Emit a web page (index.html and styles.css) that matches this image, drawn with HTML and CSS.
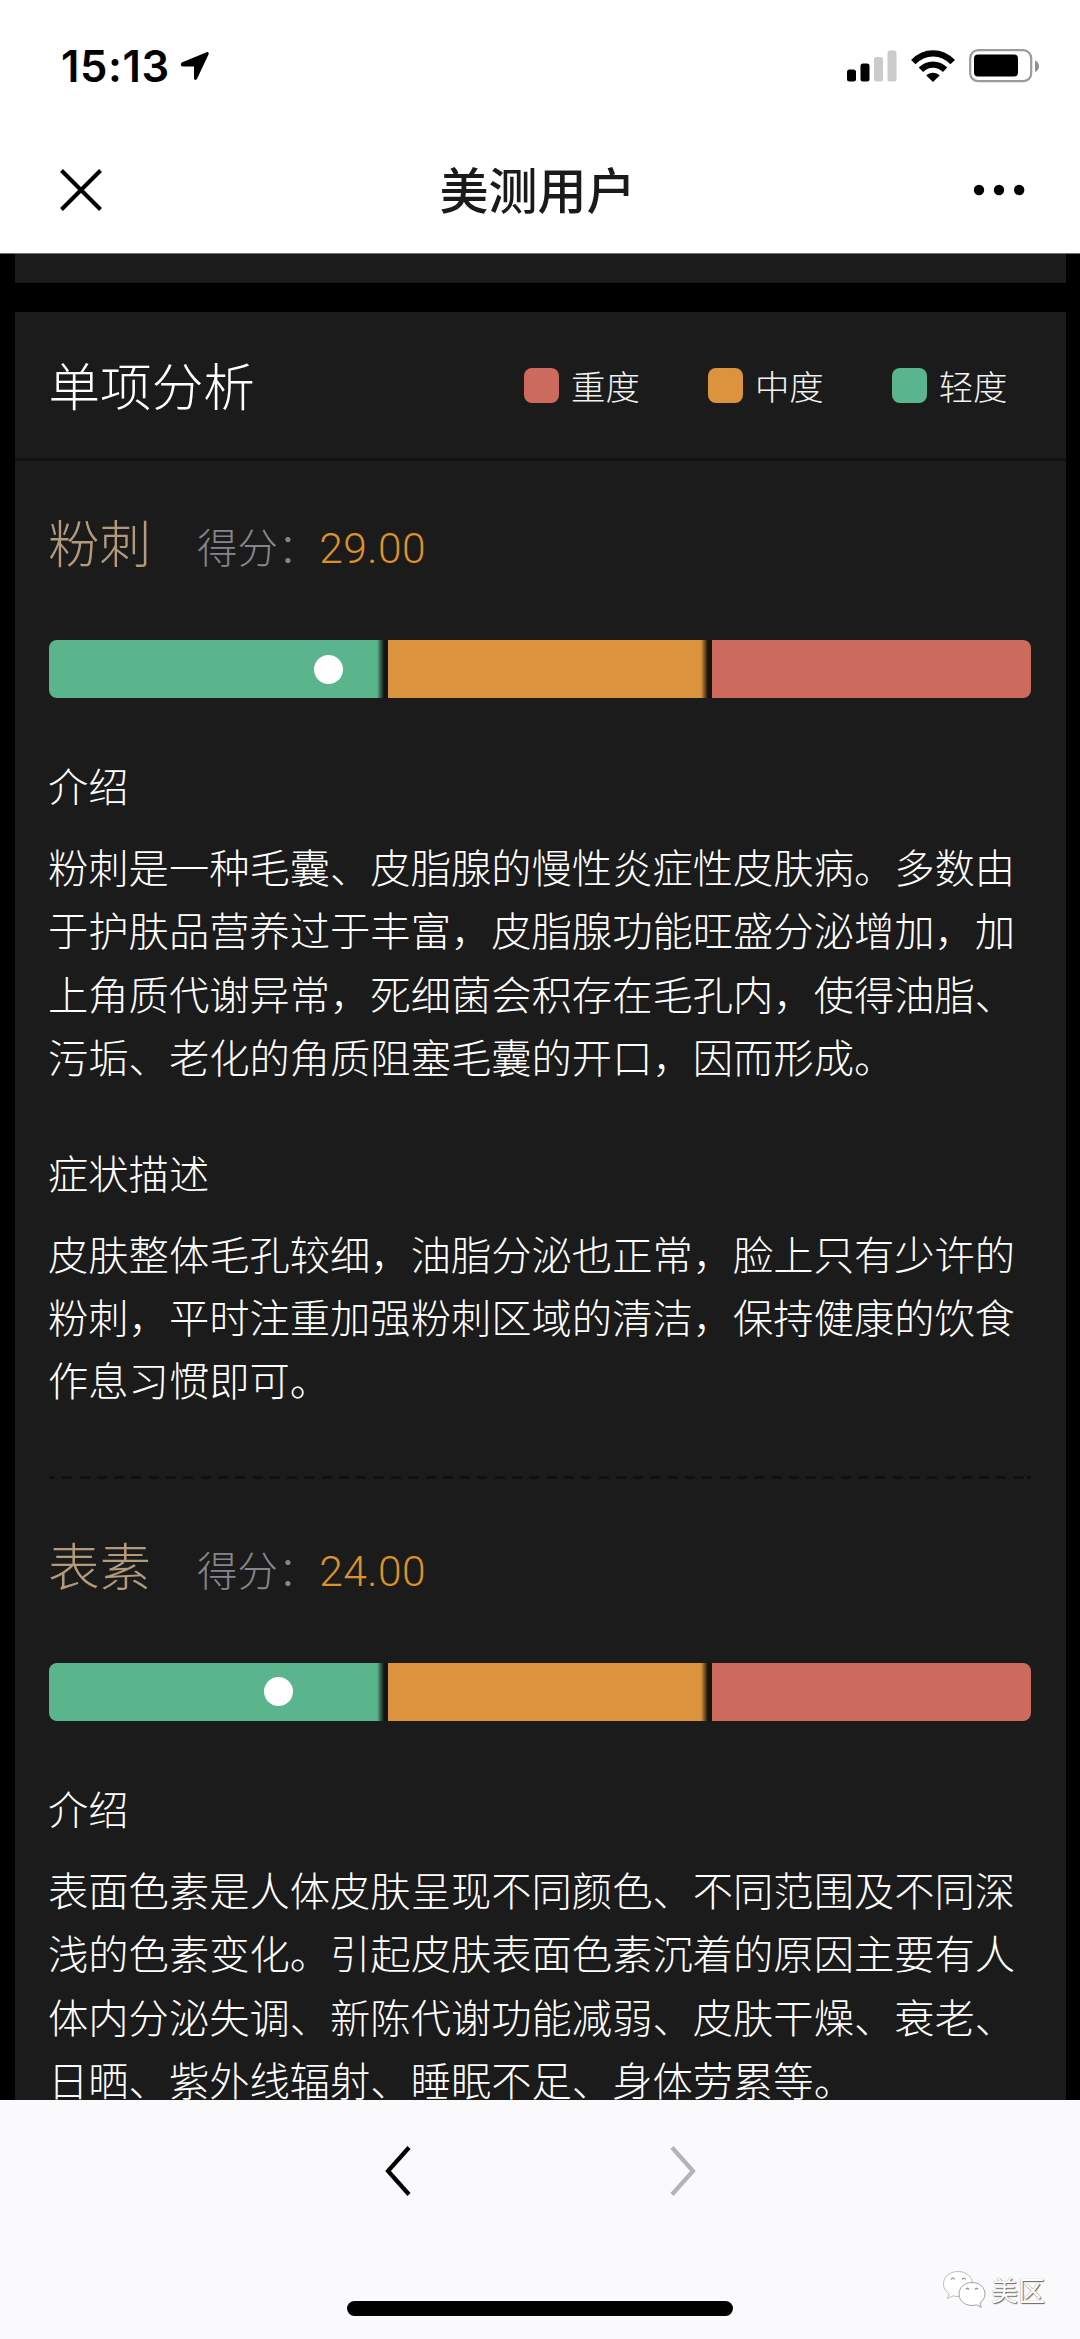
FILE: index.html
```html
<!DOCTYPE html>
<html lang="zh-CN">
<head>
<meta charset="utf-8">
<title>美测用户</title>
<link rel="stylesheet" href="styles.css">
</head>
<body>
<div class="screen">
  <header class="top">
    <div class="status">
      <div class="status-left">
        <span class="time">15:13</span>
        <svg class="loc" width="30" height="30" viewBox="0 0 30 30"><path d="M26.600 1.200 2.300 11.200c-2.200 1-1.800 4.200.5 4.200H14V27c0 2.200 2.300 2.600 3.200.6L28.600 3.200c.6-1.500-.6-2.600-2-2Z"/></svg>
      </div>
      <div class="status-right">
        <svg width="50" height="32" viewBox="0 0 50 32"><rect x="0" y="19.500" width="9" height="12" rx="2.500"/><rect x="13.500" y="13.500" width="9" height="18" rx="2.500"/><rect x="27" y="7" width="9" height="24.500" rx="2.500" fill="#cbcbcb"/><rect x="40.500" y="0.500" width="9" height="31" rx="2.500" fill="#cbcbcb"/></svg>
        <svg width="44" height="32" viewBox="0 0 44 32"><g fill="none" stroke="#000" stroke-width="6.200"><path d="M2.300 12.200C13.400.400 30.600.400 41.700 12.200"/><path d="M9.900 19.800c6.900-7 17.300-7 24.200 0"/></g><path d="M15.300 25.400c3.700-3.700 9.700-3.700 13.400 0L22 32Z"/></svg>
        <svg width="71" height="34" viewBox="0 0 71 34"><rect x="1.200" y="1.200" width="61" height="31" rx="8" fill="none" stroke="#9b9b9b" stroke-width="2.200"/><rect x="5" y="5.500" width="44" height="22" rx="4"/><path d="M66 11.500c5.300 2 5.300 9.500 0 11.500Z" fill="#8f8f8f"/></svg>
      </div>
    </div>
    <div class="nav">
      <svg class="close" width="42" height="42" viewBox="0 0 42 42"><path d="M1.500 1.500 40.500 40.500M40.500 1.500 1.500 40.500" stroke="#000" stroke-width="4"/></svg>
      <h1>美测用户</h1>
      <svg class="more" width="52" height="12" viewBox="0 0 52 12"><circle cx="6" cy="6" r="5.200"/><circle cx="26" cy="6" r="5.200"/><circle cx="46.200" cy="6" r="5.200"/></svg>
    </div>
  </header>

  <main>
    <div class="card previous"></div>
    <section class="card">
      <div class="card-head">
        <h2>单项分析</h2>
        <ul class="legend">
          <li><i class="swatch red"></i>重度</li>
          <li><i class="swatch orange"></i>中度</li>
          <li><i class="swatch green"></i>轻度</li>
        </ul>
      </div>

      <article class="item">
        <div class="item-head"><h3>粉刺</h3><span class="label">得分：</span><span class="score">29.00</span></div>
        <div class="bar"><div class="part low"></div><div class="part mid"></div><div class="part high"></div><b class="dot" style="left:28.500%"></b></div>
        <h4>介绍</h4>
        <p>粉刺是一种毛囊、皮脂腺的慢性炎症性皮肤病。多数由于护肤品营养过于丰富，皮脂腺功能旺盛分泌增加，加上角质代谢异常，死细菌会积存在毛孔内，使得油脂、污垢、老化的角质阻塞毛囊的开口，因而形成。</p>
        <h4>症状描述</h4>
        <p>皮肤整体毛孔较细，油脂分泌也正常，脸上只有少许的粉刺，平时注重加强粉刺区域的清洁，保持健康的饮食作息习惯即可。</p>
      </article>
      <div class="dash"></div>
      <article class="item">
        <div class="item-head"><h3>表素</h3><span class="label">得分：</span><span class="score">24.00</span></div>
        <div class="bar"><div class="part low"></div><div class="part mid"></div><div class="part high"></div><b class="dot" style="left:23.400%"></b></div>
        <h4>介绍</h4>
        <p>表面色素是人体皮肤呈现不同颜色、不同范围及不同深浅的色素变化。引起皮肤表面色素沉着的原因主要有人体内分泌失调、新陈代谢功能减弱、皮肤干燥、衰老、日晒、紫外线辐射、睡眠不足、身体劳累等。</p>
      </article>
    </section>
  </main>

  <footer class="bottom">
    <div class="history">
      <svg width="28" height="50" viewBox="0 0 28 50"><path d="M25 1.500 4 25 25 48.500" fill="none" stroke="#000" stroke-width="4.200"/></svg>
      <svg width="28" height="50" viewBox="0 0 28 50"><path d="M3 1.500 24 25 3 48.500" fill="none" stroke="#b4b4b6" stroke-width="4.200"/></svg>
    </div>
    <div class="home"></div>
    <div class="mark">
      <svg width="46" height="40" viewBox="0 0 46 40"><g fill="#fff" stroke="#a2a2a4" stroke-width="1"><path d="M16 1.500C7.500 1.500 1.500 7 1.500 14c0 4.200 2.200 7.600 5.700 10L5.500 28.500l5.500-2.700c1.600.5 3.300.7 5 .7 8.500 0 14.500-5.500 14.500-12.500S24.500 1.500 16 1.500Z" stroke-opacity=".7"/><path d="M30 12.500c-7.500 0-13 5-13 11.500s5.500 11.500 13 11.500c1.700 0 3.200-.2 4.500-.7l4.800 2.500-1.300-4.500c3.100-2.200 5-5.200 5-8.800 0-6.500-5.500-11.500-13-11.500Z"/></g><g fill="none" stroke="#909092" stroke-width="1.300"><path d="M9 9.500q1.800-2.800 3.600 0M20 9.500q1.800-2.800 3.600 0M24 19.500q1.500-2.500 3 0M33 19.500q1.500-2.500 3 0"/></g></svg>
      <span>美区</span>
    </div>
  </footer>
</div>
</body>
</html>
```
FILE: styles.css
```css
* { box-sizing: border-box; margin: 0; padding: 0; }
body { background: #fff; font-family: "Noto Sans CJK SC", sans-serif; }
svg { display: block; flex: none; }
.screen { width: 1080px; height: 2339px; display: flex; flex-direction: column; overflow: hidden; }

.top { height: 254px; flex: none; background: #fff; border-bottom: 1px solid #6d7370; }
.status { height: 132px; padding: 0 40px 0 61px; display: flex; justify-content: space-between; align-items: center; }
.status-left { display: flex; align-items: center; gap: 10px; }
.time { font: 600 43.500px/50px Inter, sans-serif; letter-spacing: 0.600px; color: #000; }
.loc { margin-top: -1px; }
.status-right { display: flex; align-items: center; gap: 14px; }
.nav { height: 116px; padding: 0 55px 0 60px; display: grid; grid-template-columns: 1fr auto 1fr; align-items: center; }
.nav h1 { margin: -5px 10px 0 0; font-weight: 500; font-size: 49px; line-height: 70px; color: #1a1a1a; }
.close { margin-top: -1px; }
.more { justify-self: end; }

main { flex: none; height: 1846px; overflow: hidden; background: #000; padding: 0 14.500px; }
.card { background: #1b1b1b; }
.previous { height: 29px; margin-bottom: 29px; }
.card-head { height: 149px; padding: 0 58px 0 34px; display: flex; align-items: center; justify-content: space-between; border-bottom: 3px solid #121212; }
.card-head h2 { margin-top: -3px; font-weight: 300; font-size: 51.600px; line-height: 74px; color: #fff; }
.legend { display: flex; gap: 68px; list-style: none; font-weight: 300; font-size: 34.400px; line-height: 50px; color: #f2f2f2; }
.legend li { display: flex; align-items: center; gap: 12px; }
.swatch { width: 35px; height: 35px; border-radius: 8px; }
.red { background: #cd6a5e; }
.orange { background: #dc933e; }
.green { background: #5ab48c; }

.item { padding: 43px 34.500px 0; }
.item-head { height: 74px; display: flex; align-items: baseline; }
.item-head h3 { width: 149px; margin-left: -1px; font-weight: 300; font-size: 51.600px; line-height: 74px; color: #b39a7c; }
.label { font-weight: 300; font-size: 40.400px; line-height: 60px; color: #85858b; }
.score { margin-left: 1px; font: 300 42.500px/60px Roboto, sans-serif; letter-spacing: 0.500px; color: #dd9129; }
.bar { position: relative; margin-top: 62px; height: 58px; display: flex; border-radius: 8px; overflow: hidden; background: #1b1b1b; }
.low { width: 339px; background: linear-gradient(90deg, #5ab48c 328px, #101614 335px, #151515); }
.mid { width: 323.500px; background: linear-gradient(90deg, #dc933e 313px, #19130c 320px, #151515); }
.high { flex: 1; background: #cd6a5e; }
.dot { position: absolute; top: 50%; width: 29px; height: 29px; margin: -14.500px 0 0 -14.500px; border-radius: 50%; background: #fff; }
h4 { margin: 55px 0 0 -1px; font-weight: 300; font-size: 40.300px; line-height: 64px; color: #fff; }
.item p { margin: 17px 0 0 -1px; font-weight: 300; font-size: 40.300px; line-height: 63.400px; color: #fff; }
.item p + h4 { margin-top: 52px; }
.dash { height: 3px; margin: 65px 34.500px 0; background: repeating-linear-gradient(90deg, #101010 0 10px, transparent 10px 17.300px) -4px 0; }
.dash + .item { padding-top: 48px; }

.bottom { flex: 1; background: #fafafc; position: relative; display: flex; flex-direction: column; align-items: center; justify-content: space-between; padding: 46px 0 23px; }
.history { display: flex; gap: 257px; }
.home { width: 386px; height: 15px; border-radius: 8px; background: #000; }
.mark { position: absolute; left: 942px; top: 170px; display: flex; align-items: center; gap: 3px; }
.mark span { font-size: 27px; line-height: 36px; color: #fdfdfd; text-shadow: 1px 1px 1px #666, 0 0 1px #888; }
```
